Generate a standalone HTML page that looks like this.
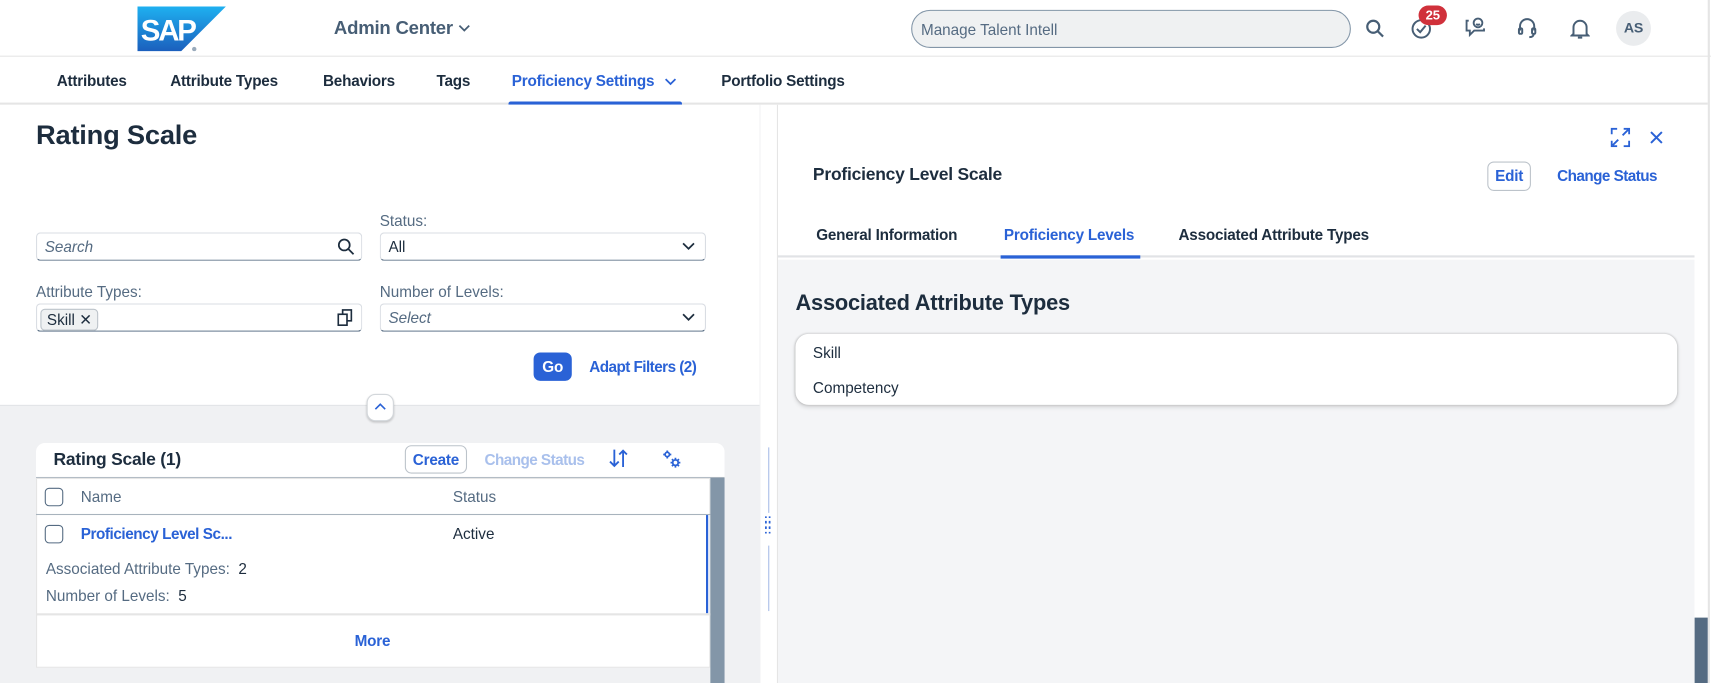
<!DOCTYPE html>
<html><head><meta charset="utf-8"><style>
*{box-sizing:border-box;margin:0;padding:0}
html,body{width:1711px;height:683px;overflow:hidden;background:#fff;font-family:"Liberation Sans",Arial,sans-serif;color:#1d2d3e}
#w{position:absolute;left:0;top:0;width:1568px;height:626px;transform:scale(1.09119);transform-origin:0 0;background:#fff}
.a{position:absolute;white-space:nowrap}
.b{font-weight:bold;letter-spacing:-0.2px}
.blue{color:#2a62d6}
.inp{position:absolute;height:26px;border:1px solid #d9dde3;border-bottom:1px solid #556b82;border-radius:4px;background:#fff;font-size:14px;padding:0 7px;line-height:24px}
</style></head><body><div id="w">
<div class="a" style="left:0;top:0;width:1568px;height:52px;border-bottom:1px solid #e5e5e5;background:#fff"></div>
<svg class="a" style="left:126px;top:6px" width="81" height="41" viewBox="0 0 81 41"><defs><linearGradient id="g" x1="0" y1="0" x2="0" y2="1"><stop offset="0" stop-color="#1eb0f0"/><stop offset="1" stop-color="#1b5fbd"/></linearGradient></defs><polygon points="0,0 81,0 40,41 0,41" fill="url(#g)"/><text x="3" y="31" font-family="Liberation Sans" font-weight="bold" font-size="27" fill="#fff" letter-spacing="-2">SAP</text><circle cx="52" cy="39" r="2" fill="#9ab"/></svg>
<div class="a b" style="left:306px;top:16px;font-size:17px;color:#475e75">Admin Center</div>
<svg class="a" style="left:420px;top:22px" width="11" height="8" viewBox="0 0 11 8" fill="none" stroke="#475e75" stroke-width="1.6"><path d="M1 1.5l4.5 4.5L10 1.5"/></svg>
<div class="a" style="left:835px;top:9px;width:403px;height:35px;border:1px solid #8396a8;border-radius:18px;background:#eff1f2;font-size:14px;color:#556b82;padding:9px 8px">Manage Talent Intell</div>
<svg class="a" style="left:1251px;top:17px" width="18" height="18" viewBox="0 0 18 18" fill="none" stroke="#475e75" stroke-width="2"><circle cx="7.5" cy="7.5" r="5.5"/><path d="M11.5 11.5l5 5"/></svg>
<svg class="a" style="left:1293px;top:17px" width="19" height="19" viewBox="0 0 19 19" fill="none" stroke="#475e75" stroke-width="1.8"><circle cx="9.5" cy="9.5" r="8"/><path d="M5.5 9.5l3 3 5-6"/></svg>
<div class="a b" style="left:1300px;top:5px;width:26px;height:18px;border-radius:9px;background:#d0313b;color:#fff;font-size:12px;text-align:center;line-height:18px">25</div>
<svg class="a" style="left:1341px;top:15px" width="22" height="22" viewBox="0 0 22 22" fill="none" stroke="#475e75" stroke-width="1.7"><path d="M5 4H3v9h3v4l4-4h9v-2"/><circle cx="13.5" cy="6" r="4"/><path d="M11.8 7q1.7 1.5 3.4 0"/></svg>
<svg class="a" style="left:1390px;top:16px" width="19" height="20" viewBox="0 0 19 20" fill="none" stroke="#475e75" stroke-width="1.8"><path d="M3 12V8a6.5 6.5 0 0113 0v4"/><rect x="2" y="10" width="3" height="5" rx="1"/><rect x="14" y="10" width="3" height="5" rx="1"/><path d="M15.5 15q0 3-4 3"/></svg>
<svg class="a" style="left:1439px;top:16px" width="18" height="20" viewBox="0 0 18 20" fill="none" stroke="#475e75" stroke-width="1.8"><path d="M3 15V9a6 6 0 0112 0v6l1.5 1.5h-15z"/><path d="M7 18.5h4"/></svg>
<div class="a b" style="left:1481px;top:10px;width:32px;height:32px;border-radius:16px;background:#eaecee;color:#475e75;font-size:13px;text-align:center;line-height:32px">AS</div>
<div class="a" style="left:1565px;top:0;width:2px;height:626px;background:#e5e5e5"></div>
<div class="a" style="left:0;top:52px;width:1565px;height:44px;border-bottom:2px solid #e5e5e5"></div>
<div class="a b" style="top:66px;left:52px;font-size:14px">Attributes</div>
<div class="a b" style="top:66px;left:156px;font-size:14px">Attribute Types</div>
<div class="a b" style="top:66px;left:296px;font-size:14px">Behaviors</div>
<div class="a b" style="top:66px;left:400px;font-size:14px">Tags</div>
<div class="a b blue" style="top:66px;left:469px;font-size:14px">Proficiency Settings</div>
<svg class="a" style="left:609px;top:71px" width="11" height="8" viewBox="0 0 11 8" fill="none" stroke="#2a62d6" stroke-width="1.6"><path d="M1 1.5l4.5 4.5L10 1.5"/></svg>
<div class="a" style="top:93px;left:466px;width:159px;height:3px;background:#2a62d6;border-radius:2px 2px 0 0"></div>
<div class="a b" style="top:66px;left:661px;font-size:14px">Portfolio Settings</div>
<div class="a" style="left:0;top:96px;width:697px;height:530px;background:#f0f1f3"></div>
<div class="a" style="left:0;top:96px;width:696px;height:276px;background:#fff;border-bottom:1px solid #e1e3e6"></div>
<div class="a b" style="left:33px;top:110px;font-size:25px">Rating Scale</div>
<div class="a" style="left:348px;top:194px;font-size:14px;color:#556b82">Status:</div>
<div class="inp" style="left:33px;top:213px;width:299px;color:#556b82;font-style:italic">Search</div>
<svg class="a" style="left:309px;top:218px" width="16" height="16" viewBox="0 0 16 16" fill="none" stroke="#1d2d3e" stroke-width="1.6"><circle cx="6.5" cy="6.5" r="5"/><path d="M10 10l5 5"/></svg>
<div class="inp" style="left:348px;top:213px;width:299px">All</div>
<svg class="a" style="left:625px;top:221px" width="12" height="10" viewBox="0 0 12 10" fill="none" stroke="#1d2d3e" stroke-width="1.6"><path d="M1 2l5 5 5-5"/></svg>
<div class="a" style="left:33px;top:259px;font-size:14px;color:#556b82">Attribute Types:</div>
<div class="a" style="left:348px;top:259px;font-size:14px;color:#556b82">Number of Levels:</div>
<div class="inp" style="left:33px;top:278px;width:299px;padding:2px 3px"><span style="display:inline-block;border:1px solid #bcc3ca;border-radius:4px;background:#eff1f2;height:20px;line-height:18px;padding:0 5px;font-size:14px">Skill &#x2715;</span></div>
<svg class="a" style="left:309px;top:283px" width="14" height="16" viewBox="0 0 14 16" fill="none" stroke="#1d2d3e" stroke-width="1.5"><rect x="1" y="5" width="8" height="10"/><path d="M5 5V1h8v10H9"/></svg>
<div class="inp" style="left:348px;top:278px;width:299px;color:#556b82;font-style:italic">Select</div>
<svg class="a" style="left:625px;top:286px" width="12" height="10" viewBox="0 0 12 10" fill="none" stroke="#1d2d3e" stroke-width="1.6"><path d="M1 2l5 5 5-5"/></svg>
<div class="a b" style="left:489px;top:323px;width:35px;height:26px;border-radius:6px;background:#2a62d6;color:#fff;font-size:14px;text-align:center;line-height:26px">Go</div>
<div class="a b blue" style="left:540px;top:328px;font-size:14px;letter-spacing:-0.5px">Adapt Filters (2)</div>
<div class="a" style="left:336px;top:361px;width:25px;height:25px;border-radius:8px;background:#fff;border:1px solid #d3d7db;box-shadow:0 1px 2px rgba(0,0,0,.2)"></div>
<svg class="a" style="left:343px;top:369px" width="11" height="8" viewBox="0 0 11 8" fill="none" stroke="#2a62d6" stroke-width="1.5"><path d="M1 6l4.5-4.5L10 6"/></svg>
<div class="a" style="left:33px;top:406px;width:631px;height:32px;background:#fff;border-radius:8px 8px 0 0;border-bottom:1px solid #a8b3bd"></div>
<div class="a b" style="left:49px;top:413px;font-size:16px">Rating Scale (1)</div>
<div class="a b blue" style="left:371px;top:408px;width:57px;height:26px;border:1px solid #bcc3ca;border-radius:6px;font-size:14px;text-align:center;line-height:24px">Create</div>
<div class="a b" style="left:444px;top:413px;font-size:14px;color:#a9c0ec;letter-spacing:-0.5px">Change Status</div>
<svg class="a" style="left:557px;top:411px" width="20" height="18" viewBox="0 0 20 18" fill="none" stroke="#2a62d6" stroke-width="1.7"><path d="M6 1v15M2 12l4 4 4-4"/><path d="M14 17V2M10.5 5.5L14 2l3.5 3.5"/></svg>
<svg class="a" style="left:607px;top:412px" width="18" height="18" viewBox="0 0 18 18" fill="none" stroke="#2a62d6" stroke-width="1.6"><circle cx="4.5" cy="4.5" r="2"/><path d="M4.5 0.8v1.7M4.5 6.5v1.7M0.8 4.5h1.7M6.5 4.5h1.7"/><circle cx="12" cy="12" r="2.5"/><path d="M12 7.5v2M12 14.5v2M7.5 12h2M14.5 12h2M8.8 8.8l1.4 1.4M13.8 13.8l1.4 1.4M8.8 15.2l1.4-1.4M13.8 10.2l1.4-1.4"/></svg>
<div class="a" style="left:33px;top:438px;width:618px;height:174px;background:#fff;border:1px solid #e5e5e5"></div>
<div class="a" style="left:651px;top:438px;width:13px;height:188px;background:#8396a8"></div>
<div class="a" style="left:33px;top:471px;width:618px;height:1px;background:#a8b3bd"></div>
<div class="a" style="left:41px;top:447px;width:17px;height:17px;border:1px solid #556b82;border-radius:4px;background:#fff"></div>
<div class="a" style="left:74px;top:447px;font-size:14px;color:#556b82">Name</div>
<div class="a" style="left:415px;top:447px;font-size:14px;color:#556b82">Status</div>
<div class="a" style="left:41px;top:481px;width:17px;height:17px;border:1px solid #556b82;border-radius:4px;background:#fff"></div>
<div class="a b blue" style="left:74px;top:481px;font-size:14px;letter-spacing:-0.4px">Proficiency Level Sc...</div>
<div class="a" style="left:415px;top:481px;font-size:14px">Active</div>
<div class="a" style="left:42px;top:513px;font-size:14px;color:#556b82">Associated Attribute Types:&nbsp; <span style="color:#1d2d3e">2</span></div>
<div class="a" style="left:42px;top:538px;font-size:14px;color:#556b82">Number of Levels:&nbsp; <span style="color:#1d2d3e">5</span></div>
<div class="a" style="left:647px;top:472px;width:2px;height:90px;background:#2a62d6"></div>
<div class="a" style="left:33px;top:562px;width:618px;height:2px;background:#e5e5e5"></div>
<div class="a b blue" style="left:325px;top:579px;font-size:14px">More</div>
<div class="a" style="left:697px;top:96px;width:16px;height:530px;background:#fff"></div>
<div class="a" style="left:712px;top:96px;width:1px;height:530px;background:#e5e5e5"></div>
<div class="a" style="left:704px;top:410px;width:1px;height:60px;background:#aabde8"></div>
<div class="a" style="left:704px;top:500px;width:1px;height:60px;background:#aabde8"></div>
<div class="a b" style="left:700px;top:474px;font-size:11px;line-height:5px;color:#2a62d6;width:10px">::<br>::<br>::</div>
<div class="a" style="left:713px;top:96px;width:840px;height:140px;background:#fff;border-bottom:2px solid #e1e3e6"></div>
<div class="a" style="left:713px;top:238px;width:840px;height:388px;background:#f4f5f7"></div>
<div class="a" style="left:1553px;top:96px;width:12px;height:530px;background:#fff"></div>
<div class="a" style="left:1553px;top:566px;width:12px;height:60px;background:#556b82"></div>
<svg class="a" style="left:1476px;top:117px" width="18" height="18" viewBox="0 0 18 18" fill="none" stroke="#2a62d6" stroke-width="1.7"><path d="M1 6V1h5M12 1h5v5M17 12v5h-5M6 17H1v-5M11 7l5-5M7 11l-5 5"/></svg>
<svg class="a" style="left:1511px;top:119px" width="14" height="14" viewBox="0 0 14 14" fill="none" stroke="#2a62d6" stroke-width="1.8"><path d="M2 2l10 10M12 2L2 12"/></svg>
<div class="a b" style="left:745px;top:152px;font-size:16px">Proficiency Level Scale</div>
<div class="a b blue" style="left:1363px;top:148px;width:40px;height:27px;border:1px solid #bcc3ca;border-radius:6px;font-size:14px;text-align:center;line-height:25px">Edit</div>
<div class="a b blue" style="left:1427px;top:153px;font-size:14px;letter-spacing:-0.5px">Change Status</div>
<div class="a b" style="left:748px;top:207px;font-size:14px">General Information</div>
<div class="a b blue" style="left:920px;top:207px;font-size:14px">Proficiency Levels</div>
<div class="a" style="left:917px;top:234px;width:128px;height:3px;background:#2a62d6"></div>
<div class="a b" style="left:1080px;top:207px;font-size:14px">Associated Attribute Types</div>
<div class="a b" style="left:729px;top:267px;font-size:20px">Associated Attribute Types</div>
<div class="a" style="left:729px;top:306px;width:808px;height:65px;background:#fff;border-radius:12px;box-shadow:0 0 2px rgba(0,0,0,.2),0 2px 4px rgba(0,0,0,.12)"></div>
<div class="a" style="left:745px;top:315px;font-size:14px">Skill</div>
<div class="a" style="left:745px;top:347px;font-size:14px">Competency</div>
</div></body></html>
